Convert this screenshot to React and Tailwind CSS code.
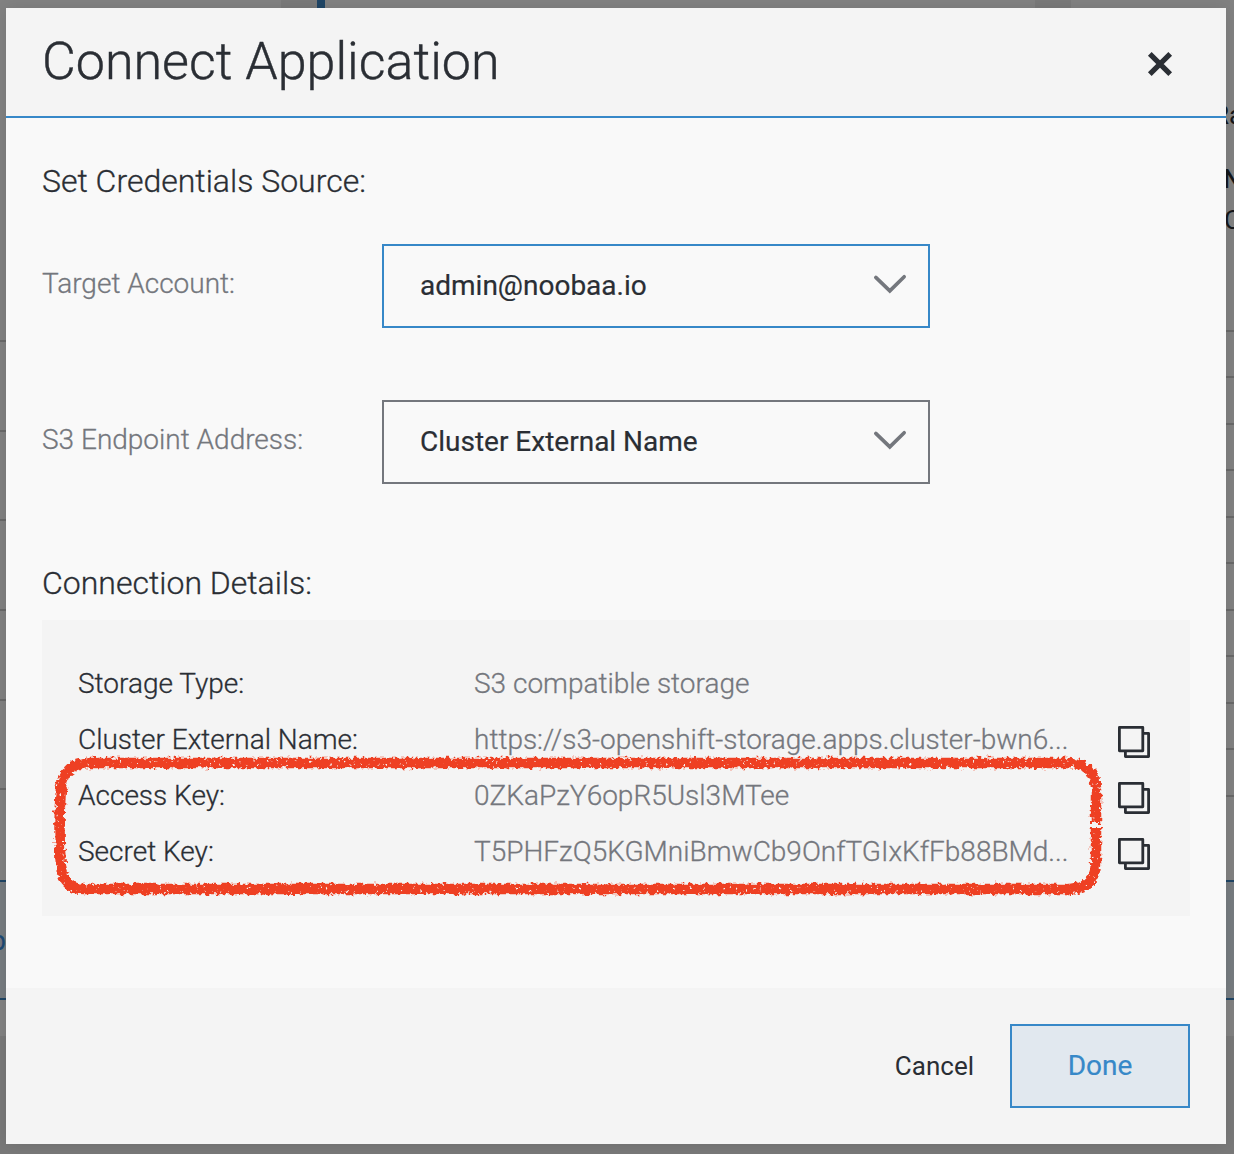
import React from "react";

const leftRules = ["h-[340px]", "h-[88px]", "h-[87px]", "h-[88px]", "h-[88px]", "h-[87px]"];
const rightRules = [
  "h-[330px]", "h-[44px]", "h-[45px]", "h-[44px]", "h-[45px]", "h-[44px]",
  "h-[45px]", "h-[44px]", "h-[45px]", "h-[44px]", "h-[45px]",
];

function Rules({ heights }) {
  return heights.map((h, i) => (
    <React.Fragment key={i}>
      <div className={h + " shrink-0"} />
      <div className="h-0.5 shrink-0 bg-[#696969]" />
    </React.Fragment>
  ));
}

function Backdrop() {
  return (
    <div className="flex h-full flex-col bg-[#797979]">
      <div className="flex h-2 shrink-0">
        <div className="w-[281px] bg-[#828282]" />
        <div className="w-9 bg-[#7a7a7a]" />
        <div className="w-2 bg-[#1f4565]" />
        <div className="w-[710px] bg-[#828282]" />
        <div className="w-9 bg-[#7a7a7a]" />
        <div className="flex-1 bg-[#828282]" />
      </div>
      <div className="-mt-2 flex h-[1036px] shrink-0 justify-between">
        <div className="flex w-1.5 flex-col overflow-hidden bg-[#828282]">
          <Rules heights={leftRules} />
          <div className="h-[90px] shrink-0" />
          <div className="flex h-[120px] shrink-0 items-center justify-end border-y-2 border-[#1f4565] bg-[#777c80] text-[28px] text-[#1d4a75]">
            <span className="pt-0.5">p</span>
          </div>
        </div>
        <div className="relative flex w-2 flex-col overflow-hidden bg-[#828282]">
          <Rules heights={rightRules} />
          <div className="h-[83px] shrink-0" />
          <div className="h-[120px] shrink-0 border-y-2 border-[#1f4565] bg-[#777c80]" />
          <div className="absolute top-[99px] -left-[13px] text-[26px] leading-8 text-[#15171a]">Ra</div>
          <div className="absolute top-[163px] -left-[3px] text-[26px] leading-8 font-medium text-[#15171a]">N</div>
          <div className="absolute top-[204px] -left-[2px] text-[26px] leading-8 text-[#15171a]">C</div>
        </div>
      </div>
    </div>
  );
}

function Chevron() {
  return (
    <svg className="h-5 w-9" viewBox="0 0 36 20" fill="none" stroke="#74777d" strokeWidth="3.6" strokeLinecap="round">
      <path d="M3.8 3.4 L17.8 16.9 L32.2 2.7" strokeLinejoin="miter" />
    </svg>
  );
}

function SelectRow({ label, value, active }) {
  return (
    <div className="flex h-[84px]">
      <label className="w-[340px] pt-5 text-[28px] leading-10 font-light text-[#74777d] [-webkit-text-stroke:0.3px]">{label}</label>
      <div
        className={
          "flex w-[548px] items-center justify-between border-2 pr-[20px] pl-9 " +
          (active ? "border-[#3788c8]" : "border-[#74777d]")
        }
      >
        <span className="text-[28px] leading-10 text-[#2a2e34] [-webkit-text-stroke:0.2px]">{value}</span>
        <span className="-mt-1">
          <Chevron />
        </span>
      </div>
    </div>
  );
}

function CopyIcon() {
  return (
    <svg className="size-8" viewBox="0 0 32 32" fill="none" stroke="#2a2e34" strokeWidth="2.8" strokeLinejoin="round">
      <path d="M26 7.4 H30.6 V30.6 H7.4 V26" />
      <rect x="1.4" y="1.4" width="23.4" height="23.4" />
    </svg>
  );
}

function DetailRow({ label, value, copy }) {
  return (
    <div className="flex h-14 items-center text-[28px] leading-10 font-light whitespace-nowrap [-webkit-text-stroke:0.3px]">
      <span className="w-[396px] text-[#2a2e34]">{label}</span>
      <span className="w-[644px] text-[#74777d]">{value}</span>
      {copy && (
        <button className="mt-1">
          <CopyIcon />
        </button>
      )}
    </div>
  );
}

function CrayonOutline() {
  return (
    <svg className="pointer-events-none absolute top-[130px] left-[4px] h-[156px] w-[1064px]" viewBox="0 0 1064 156">
      <defs>
        <filter id="crayon" x="0" y="0" width="1064" height="156" filterUnits="userSpaceOnUse" colorInterpolationFilters="sRGB">
          <feTurbulence type="fractalNoise" baseFrequency="0.25" numOctaves="2" seed="4" result="n" />
          <feDisplacementMap in="SourceGraphic" in2="n" scale="7" xChannelSelector="R" yChannelSelector="G" result="d" />
          <feTurbulence type="fractalNoise" baseFrequency="0.3" numOctaves="2" seed="9" />
          <feColorMatrix values="0 0 0 0 0  0 0 0 0 0  0 0 0 0 0  0 0 0 -9 7.2" result="holes" />
          <feComposite in="d" in2="holes" operator="in" />
          <feGaussianBlur stdDeviation="0.35" />
        </filter>
      </defs>
      <path
        d="M40 13 H1022 Q1050 13 1050 40 V73 M1050 78 V114 Q1049 139 1022 139 H38 Q18 139 15 117 Q12 78 15 37 Q18 14 42 13"
        fill="none"
        stroke="#ee4023"
        strokeWidth="10.5"
        filter="url(#crayon)"
      />
    </svg>
  );
}

export default function App() {
  return (
    <div className="relative h-[1154px] w-[1234px] overflow-hidden font-['Roboto',sans-serif]">
      <Backdrop />
      <div className="absolute inset-x-0 top-0 flex h-[1154px] pt-2 pr-2 pb-2.5 pl-1.5">
        <div className="flex w-full flex-col bg-[#f9f9f9] shadow-[0_0_16px_rgba(0,0,0,0.1)]">
          <header className="flex h-[110px] items-center justify-between border-b-2 border-[#3788c8] bg-[#f4f4f4] pr-[53px] pl-9">
            <h1 className="text-[52px] leading-[60px] font-light text-[#2a2e34] [-webkit-text-stroke:0.4px]">Connect Application</h1>
            <button className="mt-1">
              <svg className="size-[26px]" viewBox="0 0 26 26" stroke="#2a2e34" strokeWidth="5.2">
                <path d="M2.8 2.8 L23.2 23.2 M23.2 2.8 L2.8 23.2" />
              </svg>
            </button>
          </header>
          <main className="flex h-[870px] flex-col px-9 pt-[43px]">
            <h2 className="h-[83px] text-[32px] leading-10 font-light text-[#2a2e34] [-webkit-text-stroke:0.3px]">Set Credentials Source:</h2>
            <div className="flex flex-col gap-[72px]">
              <SelectRow label="Target Account:" value="admin@noobaa.io" active />
              <SelectRow label="S3 Endpoint Address:" value="Cluster External Name" />
            </div>
            <h2 className="mt-[79px] h-[57px] text-[32px] leading-10 font-light text-[#2a2e34] [-webkit-text-stroke:0.3px]">Connection Details:</h2>
            <section className="relative h-[296px] bg-[#f4f4f4] px-9 pt-9">
              <DetailRow label="Storage Type:" value="S3 compatible storage" />
              <DetailRow label="Cluster External Name:" value="https://s3-openshift-storage.apps.cluster-bwn6..." copy />
              <DetailRow label="Access Key:" value="0ZKaPzY6opR5Usl3MTee" copy />
              <DetailRow label="Secret Key:" value="T5PHFzQ5KGMniBmwCb9OnfTGIxKfFb88BMd..." copy />
              <CrayonOutline />
            </section>
          </main>
          <footer className="flex flex-1 items-center justify-end gap-9 bg-[#f4f4f4] px-9">
            <button className="text-[26px] text-[#2a2e34]">Cancel</button>
            <button className="h-[84px] w-[180px] border-2 border-[#3788c8] bg-[#e1e8ef] text-[28px] text-[#3788c8] [-webkit-text-stroke:0.2px]">Done</button>
          </footer>
        </div>
      </div>
    </div>
  );
}
